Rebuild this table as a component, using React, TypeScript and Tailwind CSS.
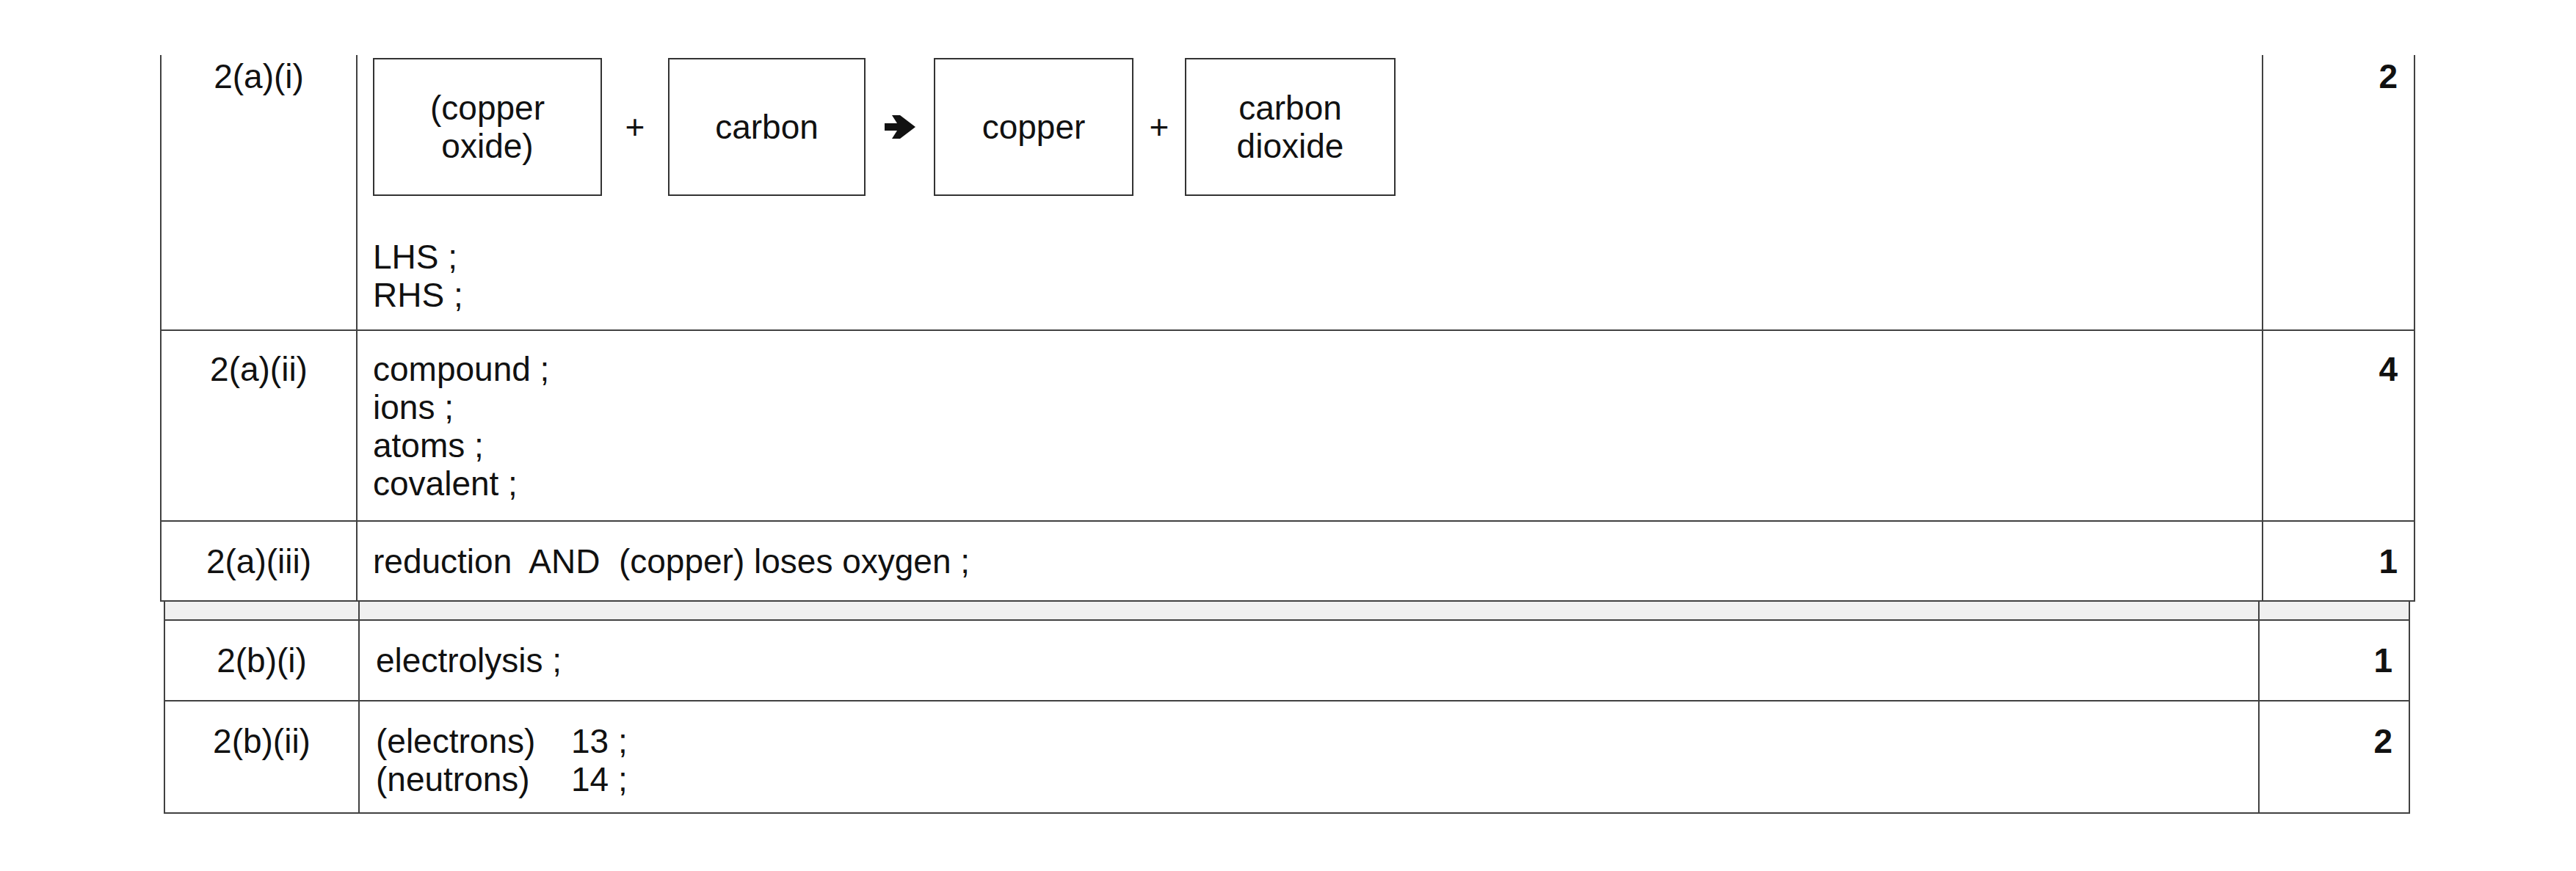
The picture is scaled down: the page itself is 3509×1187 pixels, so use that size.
const line = "border-[#414141]";

function Arrow() {
  return (
    <svg width="42" height="32" viewBox="0 0 42 32" className="shrink-0">
      <path d="M0 11 H17 L10 0 H21 L42 16 L21 32 H10 L17 21 H0 Z" fill="#111" />
    </svg>
  );
}

function Box({ children, w }: { children: React.ReactNode; w: string }) {
  return (
    <div className={`${w} h-[188px] shrink-0 border-2 border-[#333] flex items-center justify-center text-center`}>
      <div>{children}</div>
    </div>
  );
}

function TopRow({
  q,
  h,
  pt,
  mark,
  children,
}: {
  q: string;
  h: string;
  pt: string;
  mark: string;
  children: React.ReactNode;
}) {
  return (
    <div className={`grid grid-cols-[267px_2596px_205px] border-b-2 ${line} ${h}`}>
      <div className={`border-r-2 ${line} text-center ${pt}`}>{q}</div>
      <div className={`border-r-2 ${line} pl-[21px] ${pt}`}>{children}</div>
      <div className={`text-right pr-[22px] font-bold ${pt}`}>{mark}</div>
    </div>
  );
}

function BottomRow({
  q,
  h,
  pt,
  mark,
  children,
}: {
  q: string;
  h: string;
  pt: string;
  mark: string;
  children: React.ReactNode;
}) {
  return (
    <div className={`grid grid-cols-[265px_2588px_203px] border-b-2 ${line} ${h}`}>
      <div className={`border-r-2 ${line} text-center ${pt}`}>{q}</div>
      <div className={`border-r-2 ${line} pl-[22px] ${pt}`}>{children}</div>
      <div className={`text-right pr-[22px] font-bold ${pt}`}>{mark}</div>
    </div>
  );
}

export default function App() {
  return (
    <div className="w-[3509px] h-[1187px] bg-white pt-[75px] text-[#111] text-[46px] leading-[52px] font-['Liberation_Sans',Arial,sans-serif]">
      {/* 2(a) */}
      <div className={`ml-[218px] w-[3072px] border-l-2 border-r-2 ${line}`}>
        <div className={`grid grid-cols-[267px_2596px_205px] border-b-2 ${line} h-[376px]`}>
          <div className={`border-r-2 ${line} text-center pt-[3px]`}>2(a)(i)</div>
          <div className={`border-r-2 ${line} pl-[21px] pt-[4px]`}>
            <div className="flex items-center">
              <Box w="w-[312px]">
                (copper
                <br />
                oxide)
              </Box>
              <div className="w-[90px] text-center">+</div>
              <Box w="w-[269px]">carbon</Box>
              <div className="w-[93px] flex justify-center">
                <Arrow />
              </div>
              <Box w="w-[272px]">copper</Box>
              <div className="w-[70px] text-center">+</div>
              <Box w="w-[287px]">
                carbon
                <br />
                dioxide
              </Box>
            </div>
            <div className="mt-[57px]">
              <div>LHS ;</div>
              <div>RHS ;</div>
            </div>
          </div>
          <div className="text-right pr-[22px] font-bold pt-[3px]">2</div>
        </div>

        <TopRow q="2(a)(ii)" h="h-[260px]" pt="pt-[26px]" mark="4">
          <div>compound ;</div>
          <div>ions ;</div>
          <div>atoms ;</div>
          <div>covalent ;</div>
        </TopRow>

        <TopRow q="2(a)(iii)" h="h-[109px]" pt="pt-[28px]" mark="1">
          <div className="whitespace-pre">reduction  AND  (copper) loses oxygen ;</div>
        </TopRow>
      </div>

      {/* 2(b) */}
      <div className={`ml-[223px] w-[3060px] border-l-2 border-r-2 ${line}`}>
        <div className={`grid grid-cols-[265px_2588px_203px] border-b-2 ${line} h-[26px] bg-[#f0f0f0]`}>
          <div className={`border-r-2 ${line}`} />
          <div className={`border-r-2 ${line}`} />
          <div />
        </div>

        <BottomRow q="2(b)(i)" h="h-[110px]" pt="pt-[28px]" mark="1">
          <div>electrolysis ;</div>
        </BottomRow>

        <BottomRow q="2(b)(ii)" h="h-[153px]" pt="pt-[28px]" mark="2">
          <div className="grid grid-cols-[266px_auto] w-fit">
            <div>(electrons)</div>
            <div>13 ;</div>
            <div>(neutrons)</div>
            <div>14 ;</div>
          </div>
        </BottomRow>
      </div>
    </div>
  );
}
